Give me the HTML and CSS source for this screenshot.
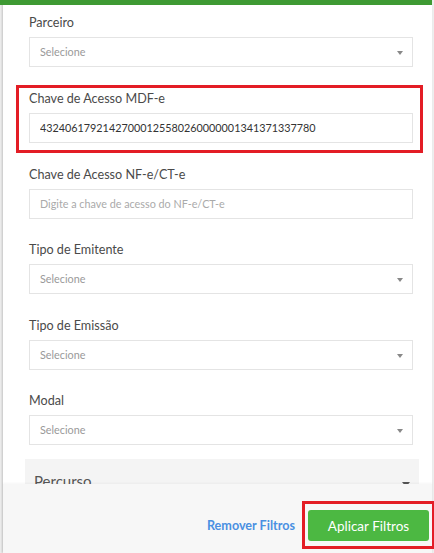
FILE: index.html
```html
<!DOCTYPE html>
<html lang="pt-BR">
<head>
    <meta charset="UTF-8">
    <meta name="viewport" content="width=device-width, initial-scale=1.0">
    <title>Filtros MDF-e</title>
    <link rel="stylesheet" href="styles.css">
</head>
<body>
    <div class="topbar"></div>

    <div class="panel">
        <div class="panel-body">
            <div class="field">
                <label>Parceiro</label>
                <div class="select">Selecione</div>
            </div>

            <div class="field highlight">
                <label>Chave de Acesso MDF-e</label>
                <input type="text" value="43240617921427000125580260000001341371337780">
            </div>

            <div class="field">
                <label>Chave de Acesso NF-e/CT-e</label>
                <input type="text" placeholder="Digite a chave de acesso do NF-e/CT-e">
            </div>

            <div class="field">
                <label>Tipo de Emitente</label>
                <div class="select">Selecione</div>
            </div>

            <div class="field">
                <label>Tipo de Emissão</label>
                <div class="select">Selecione</div>
            </div>

            <div class="field">
                <label>Modal</label>
                <div class="select">Selecione</div>
            </div>

            <div class="section">
                <span>Percurso</span>
                <span class="caret"></span>
            </div>
        </div>

        <div class="panel-footer">
            <a class="link" href="#">Remover Filtros</a>
            <span class="mark">
                <button class="btn-apply">Aplicar Filtros</button>
            </span>
        </div>
    </div>
</body>
</html>
```

FILE: styles.css
```css
body {
    font-family: Lato, "Open Sans", sans-serif;
    background-color: #eeeeee;
    margin: 0;
    width: 434px;
    height: 553px;
    overflow: hidden;
}

.topbar {
    position: absolute;
    top: 0;
    left: 0;
    width: 432px;
    height: 5px;
    background-color: #3e9a33;
    z-index: 2;
}

.panel {
    margin-left: 3px;
    width: 429px;
    height: 553px;
    background-color: #fff;
    box-shadow: -1px 0 2px rgba(0, 0, 0, 0.18);
    display: flex;
    flex-direction: column;
}

.panel-body {
    flex: 1;
    overflow: hidden;
    padding: 14px 19px 0 26px;
}

.field {
    margin-bottom: 22.5px;
}

.field label {
    display: block;
    font-size: 12.6px;
    line-height: 18px;
    color: #4a4a4a;
    margin-bottom: 5px;
}

.field input,
.select {
    box-sizing: border-box;
    display: block;
    width: 100%;
    height: 30px;
    padding: 0 10px;
    border: 1px solid #e4e4e4;
    font-family: inherit;
    font-size: 10.8px;
    line-height: 28px;
    color: #333;
    background-color: #fff;
    outline: none;
}

.field input::placeholder {
    color: #aaa;
}

.select {
    position: relative;
    color: #999;
}

.select::after {
    content: "";
    position: absolute;
    right: 9px;
    top: 13px;
    border-left: 3.5px solid transparent;
    border-right: 3.5px solid transparent;
    border-top: 4px solid #888;
}

.highlight {
    margin: -5px -10px 13px -13px;
    padding: 2px 7px 7px 10px;
    border: 3px solid #e31d25;
}

.section {
    margin: -8.5px -6px 0 -4px;
    padding: 13px 9px 10px 9px;
    background-color: #f4f4f4;
    display: flex;
    justify-content: space-between;
    align-items: center;
    font-size: 15px;
    color: #555;
}

.caret {
    margin-top: 7px;
    border-left: 4.5px solid transparent;
    border-right: 4.5px solid transparent;
    border-top: 5px solid #555;
}

.panel-footer {
    height: 69px;
    box-sizing: border-box;
    padding: 17px 4px 0 0;
    background-color: #f7f7f7;
    box-shadow: 0 -1px 2px rgba(0, 0, 0, 0.04);
    display: flex;
    justify-content: flex-end;
    align-items: flex-start;
    position: relative;
}

.link {
    margin-top: 17px;
    margin-right: 7px;
    color: #4a90e2;
    font-weight: bold;
    font-size: 12.6px;
    text-decoration: none;
}

.mark {
    display: block;
    padding: 6px 3px 5px 3px;
    margin-right: -7px;
    border: 3px solid #e31d25;
}

.btn-apply {
    display: block;
    width: 121px;
    height: 31px;
    background-color: #4cb842;
    color: #fff;
    border: none;
    border-radius: 3px;
    font-family: inherit;
    font-size: 13.5px;
    cursor: pointer;
}
```
